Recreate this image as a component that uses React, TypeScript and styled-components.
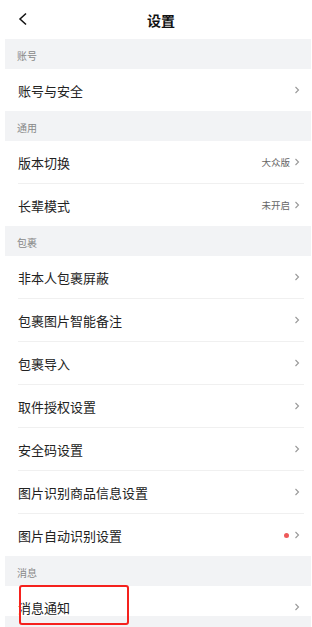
import styled, { createGlobalStyle } from 'styled-components';

const GlobalStyle = createGlobalStyle`
    html, body {
        margin: 0;
        padding: 0;
        background: #fff;
    }
    body {
        font-family: "Noto Sans CJK SC", "Noto Sans", sans-serif;
    }
`;

const Page = styled.div`
    position: relative;
    width: 312px;
    height: 627px;
    overflow: hidden;
    background: #fff;
`;

const Header = styled.div`
    height: 39px;
    display: flex;
    align-items: center;
    justify-content: center;
    padding-left: 10px;
    box-sizing: border-box;
    position: relative;
`;

const BackBtn = styled.div`
    position: absolute;
    left: 16px;
    top: 12px;
    width: 14px;
    height: 14px;
    display: flex;
`;

const Title = styled.p`
    margin: 0;
    font-size: 14px;
    font-weight: 700;
    color: #111;
`;

const Body = styled.div`
    margin-left: 5px;
    margin-right: 1px;
    background: #f2f3f5;
    display: flex;
    flex-direction: column;
    padding-bottom: 20px;
`;

const SectionTitle = styled.div`
    height: 30px;
    display: flex;
    align-items: center;
    padding: 0 12px;
    padding-top: 2px;
    box-sizing: border-box;
    font-size: 10px;
    color: #888;
`;

const Group = styled.div`
    background: #fff;
    display: flex;
    flex-direction: column;
`;

const Row = styled.div<{ $short?: boolean }>`
    height: ${p => (p.$short ? '30px' : '42px')};
    display: flex;
    align-items: center;
    padding: ${p => (p.$short ? '12px 11px 0 13px' : '0 11px 0 13px')};
    box-sizing: border-box;
    & + & {
        border-top: 1px solid #f0f0f0;
        margin-left: 13px;
        margin-right: 7px;
        padding-left: 0;
        padding-right: 4px;
        height: 43px;
    }
`;

const Label = styled.span`
    flex: 1;
    font-size: 13px;
    color: #222;
`;

const Value = styled.span`
    font-size: 9.5px;
    color: #666;
    margin-right: 4px;
`;

const Dot = styled.span`
    width: 5px;
    height: 5px;
    border-radius: 50%;
    background: #ee5a5a;
    margin-right: 5px;
`;

const Chevron = () => (
    <svg width="6" height="8" viewBox="0 0 6 8">
        <path d="M1.5 1 L4.5 4 L1.5 7" fill="none" stroke="#999" strokeWidth="1.1" />
    </svg>
);

const Highlight = styled.div`
    position: absolute;
    left: 19px;
    top: 585px;
    width: 106px;
    height: 36px;
    border: 2px solid #f5211d;
    border-radius: 3px;
`;

type Item = { label: string; value?: string; dot?: boolean };

const sections: { title: string; items: Item[]; short?: boolean }[] = [
    { title: '账号', items: [{ label: '账号与安全' }] },
    { title: '通用', items: [{ label: '版本切换', value: '大众版' }, { label: '长辈模式', value: '未开启' }] },
    {
        title: '包裹',
        items: [
            { label: '非本人包裹屏蔽' },
            { label: '包裹图片智能备注' },
            { label: '包裹导入' },
            { label: '取件授权设置' },
            { label: '安全码设置' },
            { label: '图片识别商品信息设置' },
            { label: '图片自动识别设置', dot: true },
        ],
    },
    { title: '消息', items: [{ label: '消息通知' }], short: true },
];

const App = () => {
    return (
        <Page>
            <GlobalStyle />
            <Header>
                <BackBtn>
                    <svg width="14" height="14" viewBox="0 0 14 14">
                        <path d="M10 1.5 L4 7 L10 12.5" fill="none" stroke="#111" strokeWidth="1.5" />
                    </svg>
                </BackBtn>
                <Title>设置</Title>
            </Header>
            <Body>
                {sections.map(s => (
                    <div key={s.title}>
                        <SectionTitle>{s.title}</SectionTitle>
                        <Group>
                            {s.items.map(it => (
                                <Row key={it.label} $short={s.short}>
                                    <Label>{it.label}</Label>
                                    {it.value && <Value>{it.value}</Value>}
                                    {it.dot && <Dot />}
                                    <Chevron />
                                </Row>
                            ))}
                        </Group>
                    </div>
                ))}
            </Body>
            <Highlight />
        </Page>
    );
};

export default App;
